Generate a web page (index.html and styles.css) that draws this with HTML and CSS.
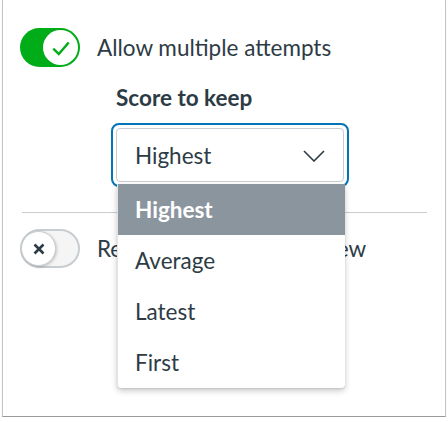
FILE: index.html
```html
<!DOCTYPE html>
<html lang="en">
<head>
    <meta charset="UTF-8">
    <meta name="viewport" content="width=device-width, initial-scale=1.0">
    <title>Quiz settings</title>
    <link rel="stylesheet" href="styles.css">
</head>
<body>
    <div class="panel">
        <!-- Multiple attempts -->
        <div class="option">
            <span class="toggle on">
                <span class="knob">
                    <svg width="22" height="22" viewBox="0 0 20 20"><path d="M3 10.5 L8 15.5 L17 5" fill="none" stroke="#00ac18" stroke-width="2.2"/></svg>
                </span>
            </span>
            <span class="option-label">Allow multiple attempts</span>
        </div>

        <div class="sub">
            <div class="sub-label">Score to keep</div>
            <div class="select-wrap">
                <div class="select">
                    <span>Highest</span>
                    <svg class="chevron" width="22" height="12" viewBox="0 0 22 12"><path d="M1 1 L11 11 L21 1" fill="none" stroke="#2d3b45" stroke-width="1.6"/></svg>
                </div>
                <!-- Open menu -->
                <ul class="menu">
                    <li class="selected">Highest</li>
                    <li>Average</li>
                    <li>Latest</li>
                    <li>First</li>
                </ul>
            </div>
        </div>

        <hr class="divider">

        <!-- Result view -->
        <div class="option">
            <span class="toggle off">
                <span class="knob">
                    <svg width="14" height="14" viewBox="0 0 14 14"><path d="M2.5 2.5 L11.5 11.5 M11.5 2.5 L2.5 11.5" fill="none" stroke="#2d3b45" stroke-width="2.6"/></svg>
                </span>
            </span>
            <span class="option-label">Restrict student result view</span>
        </div>
    </div>
</body>
</html>
```

FILE: styles.css
```css
body {
    margin: 0;
    font-family: Lato, "Open Sans", sans-serif;
    color: #2d3b45;
    background-color: #fff;
}
.panel {
    margin: 0 2px;
    height: 417px;
    box-sizing: border-box;
    border: 1px solid #c4c4c4;
    border-top: none;
    border-bottom-color: #9a9a9a;
    padding: 28px 9px 0 17px;
    box-shadow: 0 1px 1px rgba(0, 0, 0, 0.15);
}
.option {
    display: flex;
    align-items: center;
    gap: 17px;
    font-size: 22.5px;
}
.toggle {
    width: 60px;
    height: 39px;
    box-sizing: border-box;
    border-radius: 20px;
    display: flex;
    align-items: center;
    flex-shrink: 0;
}
.toggle .knob {
    width: 35px;
    height: 35px;
    border-radius: 50%;
    background-color: #fff;
    display: flex;
    align-items: center;
    justify-content: center;
}
.toggle.on {
    background-color: #00ac18;
    justify-content: flex-end;
    padding-right: 2px;
}
.toggle.off {
    background-color: #f5f5f5;
    border: 2px solid #c7cdd1;
    padding-left: 0;
}
.toggle.off .knob {
    width: 35px;
    height: 35px;
    box-sizing: border-box;
    border: 1px solid #c7cdd1;
    margin-left: -1px;
    box-shadow: 1px 1px 3px rgba(0, 0, 0, 0.2);
}
.option-label {
    line-height: 26px;
}
.sub {
    margin: 18px 0 0 96px;
}
.sub-label {
    font-weight: bold;
    font-size: 22.5px;
    line-height: 26px;
}
.select-wrap {
    position: relative;
    margin-top: 12px;
    width: 238px;
    height: 64px;
    margin-left: -5px;
    box-sizing: border-box;
    border: 2px solid #0374b5;
    border-radius: 8px;
    padding: 3px;
}
.select {
    height: 100%;
    box-sizing: border-box;
    border: 1px solid #c7cdd1;
    border-radius: 4px;
    display: flex;
    align-items: center;
    justify-content: space-between;
    padding: 0 18px 0 18px;
    font-size: 22.5px;
}
.chevron {
    margin-top: 2px;
}
.menu {
    position: absolute;
    top: 59px;
    left: 4px;
    width: 227px;
    margin: 0;
    padding: 0;
    list-style: none;
    background-color: #fff;
    border-left: 1px solid #e2e5e8;
    border-radius: 0 0 4px 4px;
    box-shadow: 0 3px 6px rgba(0, 0, 0, 0.2), 0 1px 2px rgba(0, 0, 0, 0.1);
    font-size: 22.5px;
    z-index: 2;
}
.menu li {
    height: 51px;
    line-height: 51px;
    padding-left: 17px;
}
.menu li.selected {
    background-color: #8b959e;
    color: #fff;
    font-weight: bold;
}
.divider {
    border: none;
    border-top: 1px solid #c7cdd1;
    margin: 25px 9px 16px 2px;
}
```
